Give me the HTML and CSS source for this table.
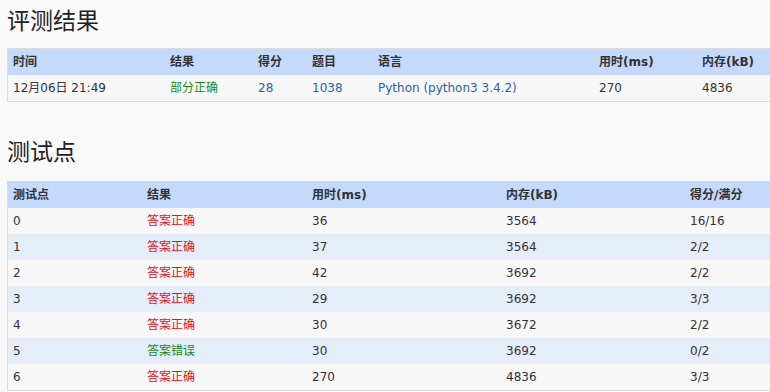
FILE: index.html
```html
<!DOCTYPE html>
<html lang="zh-CN">
<head>
  <meta charset="UTF-8">
  <title>评测结果</title>
  <link rel="stylesheet" href="styles.css">
</head>
<body>
  <div class="page">
    <h2>评测结果</h2>
    <table class="grid result">
      <thead>
        <tr>
          <th class="c-time">时间</th>
          <th class="c-status">结果</th>
          <th class="c-score">得分</th>
          <th class="c-prob">题目</th>
          <th class="c-lang">语言</th>
          <th class="c-used">用时(ms)</th>
          <th>内存(kB)</th>
        </tr>
      </thead>
      <tbody>
        <tr>
          <td>12月06日 21:49</td>
          <td class="partial">部分正确</td>
          <td><a href="#">28</a></td>
          <td><a href="#">1038</a></td>
          <td><a href="#">Python (python3 3.4.2)</a></td>
          <td>270</td>
          <td>4836</td>
        </tr>
      </tbody>
    </table>

    <h2 class="second">测试点</h2>
    <table class="grid cases">
      <thead>
        <tr>
          <th class="c-case">测试点</th>
          <th class="c-res">结果</th>
          <th class="c-ms">用时(ms)</th>
          <th class="c-kb">内存(kB)</th>
          <th>得分/满分</th>
        </tr>
      </thead>
      <tbody>
        <tr><td>0</td><td class="ok">答案正确</td><td>36</td><td>3564</td><td>16/16</td></tr>
        <tr><td>1</td><td class="ok">答案正确</td><td>37</td><td>3564</td><td>2/2</td></tr>
        <tr><td>2</td><td class="ok">答案正确</td><td>42</td><td>3692</td><td>2/2</td></tr>
        <tr><td>3</td><td class="ok">答案正确</td><td>29</td><td>3692</td><td>3/3</td></tr>
        <tr><td>4</td><td class="ok">答案正确</td><td>30</td><td>3672</td><td>2/2</td></tr>
        <tr><td>5</td><td class="wrong">答案错误</td><td>30</td><td>3692</td><td>0/2</td></tr>
        <tr><td>6</td><td class="ok">答案正确</td><td>270</td><td>4836</td><td>3/3</td></tr>
      </tbody>
    </table>
  </div>
</body>
</html>
```

FILE: styles.css
```css
html, body {
  margin: 0;
  background-color: #f9f9f9;
  overflow: hidden;
}
body {
  font-family: "DejaVu Sans", Verdana, "Noto Sans CJK SC", sans-serif;
  font-size: 12px;
  color: #333;
}
.page {
  padding-left: 7px;
}
h2 {
  font-family: "Noto Sans CJK SC", sans-serif;
  font-size: 23px;
  font-weight: normal;
  color: #222;
  line-height: 30px;
  margin: 4px 0 14px 0;
}
h2.second {
  margin-top: 33px;
  margin-bottom: 16px;
}
.grid {
  width: 100%;
  border-collapse: collapse;
  border: 1px solid #dcdcdc;
  border-right: none;
  table-layout: fixed;
}
.grid th,
.grid td {
  height: 26px;
  padding: 0 6px 0 5px;
  line-height: 14px;
  text-align: left;
  white-space: nowrap;
}
.grid th {
  background-color: #c4d9fc;
  font-weight: bold;
  color: #333;
}
.grid tbody tr:nth-child(odd) td {
  background-color: #f7f7f7;
}
.grid tbody tr:nth-child(even) td {
  background-color: #e5edf9;
}
.grid a {
  color: #2b62a8;
  text-decoration: none;
}
.partial {
  color: #1a8a1a;
}
.ok {
  color: #e0141e;
}
.wrong {
  color: #1a8a1a;
}

/* column widths */
.c-time { width: 146px; }
.c-status { width: 77px; }
.c-score { width: 43px; }
.c-prob { width: 55px; }
.c-lang { width: 210px; }
.c-used { width: 92px; }

.c-case { width: 123px; }
.c-res { width: 154px; }
.c-ms { width: 183px; }
.c-kb { width: 173px; }
```
